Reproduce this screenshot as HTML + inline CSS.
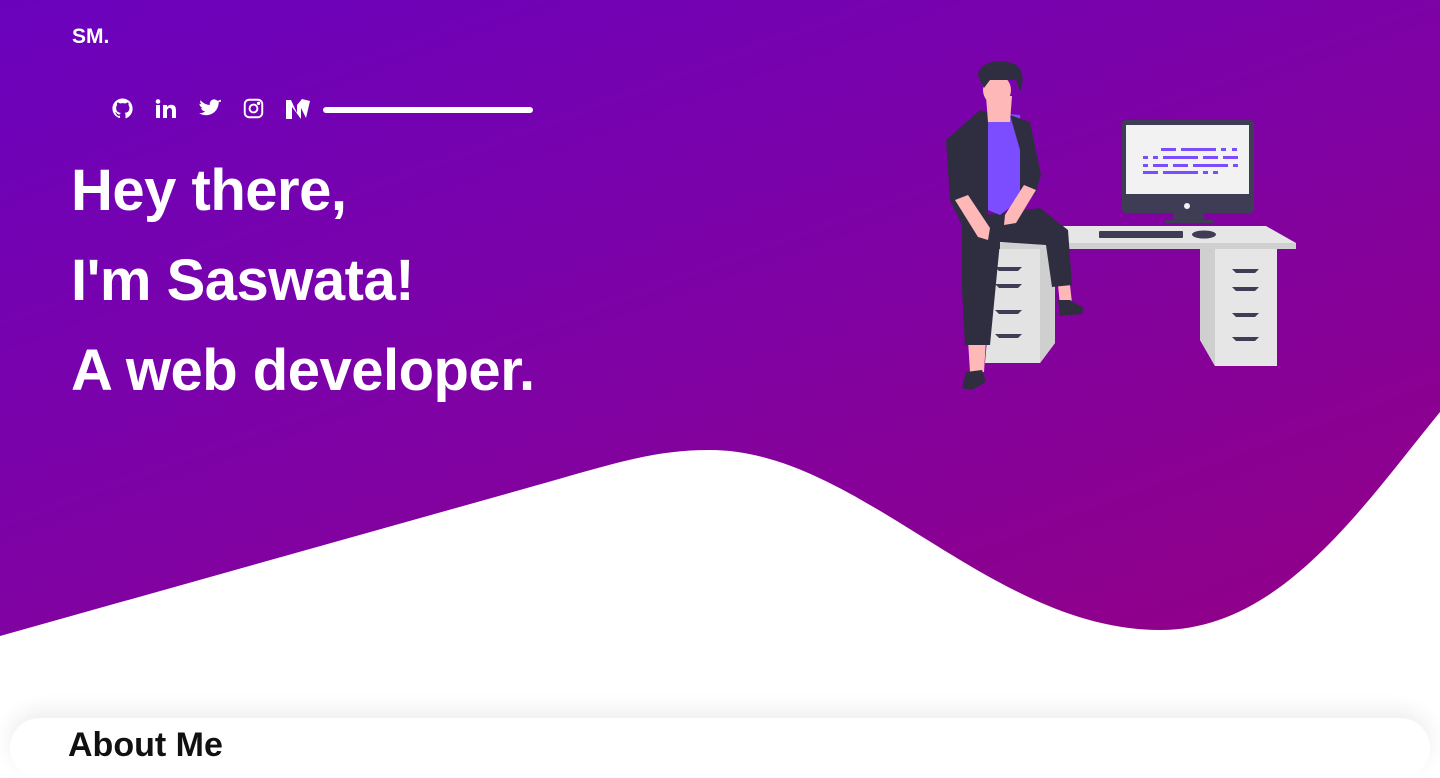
<!DOCTYPE html>
<html><head><meta charset="utf-8"><style>
*{margin:0;padding:0;box-sizing:border-box}
html,body{width:1440px;height:733px;overflow:hidden;background:#fff;font-family:"Liberation Sans",sans-serif}
.hero{position:absolute;left:0;top:0;width:1440px;height:733px;background:linear-gradient(160deg,#6a02bd 0%,#7c02a8 40%,#960080 100%)}
.logo{position:absolute;left:72px;top:25px;color:#fff;font-weight:700;font-size:21px}
.icons{position:absolute;left:112px;top:98px;display:flex;align-items:center}
.icons svg{margin-right:22px}
.bar{position:absolute;left:323px;top:107px;width:210px;height:6px;background:#fff;border-radius:3px}
h1{position:absolute;left:71px;top:146px;color:#fff;font-weight:900;font-size:58px;line-height:90px;letter-spacing:-0.5px}
.card{position:absolute;left:10px;top:718px;width:1420px;height:60px;background:#fff;border-radius:30px;box-shadow:0 -8px 20px rgba(0,0,0,.07)}
.about{position:absolute;left:68px;top:726px;font-size:34px;font-weight:900;color:#111}
</style></head><body>
<div class="hero"></div>
<svg style="position:absolute;left:0;top:0" width="1440" height="733"><path d="M0,636 L520,490 C610,465 650,450 710,450 C860,450 990,630 1160,630 C1280,630 1360,510 1440,412 L1440,733 L0,733 Z" fill="#fff"/></svg>
<div class="card"></div>
<div class="about">About Me</div>
<div class="logo">SM.</div>
<div class="icons">
<svg width="21" height="21" viewBox="0 0 24 24"><path fill="#fff" d="M12 .5C5.7.5.5 5.7.5 12c0 5.1 3.3 9.4 7.9 10.9.6.1.8-.3.8-.6v-2c-3.2.7-3.9-1.5-3.9-1.5-.5-1.3-1.3-1.7-1.3-1.7-1-.7.1-.7.1-.7 1.2.1 1.8 1.2 1.8 1.2 1 1.8 2.7 1.3 3.4 1 .1-.8.4-1.3.7-1.6-2.6-.3-5.3-1.3-5.3-5.7 0-1.3.5-2.3 1.2-3.1-.1-.3-.5-1.5.1-3.1 0 0 1-.3 3.3 1.2a11 11 0 0 1 6 0c2.3-1.5 3.3-1.2 3.3-1.2.7 1.6.2 2.8.1 3.1.8.8 1.2 1.8 1.2 3.1 0 4.4-2.7 5.4-5.3 5.7.4.4.8 1.1.8 2.2v3.3c0 .3.2.7.8.6A11.5 11.5 0 0 0 23.5 12C23.5 5.7 18.3.5 12 .5z"/></svg>
<svg width="22" height="20" viewBox="0 0 22 20"><rect x="1" y="6" width="4" height="13" fill="#fff"/><circle cx="3" cy="2.5" r="2.3" fill="#fff"/><path fill="#fff" d="M8 6h4v2c1-1.5 2.5-2.3 4.3-2.3 3 0 4.7 1.8 4.7 5.6V19h-4v-7c0-2-.7-3-2.2-3S12 10 12 12v7H8z"/></svg>
<svg width="22" height="19" viewBox="0 0 24 20"><path fill="#fff" d="M24 2.4c-.9.4-1.8.7-2.8.8 1-.6 1.8-1.6 2.2-2.7-1 .6-2 1-3.1 1.2A4.9 4.9 0 0 0 11.9 6.2 14 14 0 0 1 1.7 1C.9 2.4 1.3 4.3 2.7 5.3c-.8 0-1.6-.3-2.2-.6 0 2.4 1.7 4.4 3.9 4.8-.7.2-1.5.2-2.2.1.6 2 2.4 3.4 4.6 3.4A9.9 9.9 0 0 1 0 15.1 14 14 0 0 0 7.5 17.3c9.1 0 14-7.5 14-14v-.6c1-.7 1.8-1.5 2.5-2.4z"/></svg>
<svg width="21" height="21" viewBox="0 0 24 24" fill="none" stroke="#fff" stroke-width="2.2"><rect x="2" y="2" width="20" height="20" rx="5"/><circle cx="12" cy="12" r="4.5"/><circle cx="17.8" cy="6.2" r=".8" fill="#fff"/></svg>
<svg width="24" height="20" viewBox="0 0 24 20"><path fill="#fff" d="M0 1h5l6 13V6l5-6 8 2-4 17-5-10v11L6 8v12H0z"/></svg>
</div>
<div class="bar"></div>
<h1>Hey there,<br>I'm Saswata!<br>A web developer.</h1>
<svg style="position:absolute;left:930px;top:55px" width="380" height="340" viewBox="930 55 380 340">
<path d="M1000,226 L1266,226 L1296,243 L1296,249 L1000,249 Z" fill="#e6e6e6"/>
<rect x="1000" y="243" width="296" height="6" fill="#d0d0d0"/>
<path d="M995,249 L1055,249 L1055,343 L1040,363 L985,363 Z" fill="#e3e3e3"/>
<path d="M1040,249 L1055,249 L1055,343 L1040,363 Z" fill="#cfcfcf"/>
<path d="M1200,249 L1277,249 L1277,366 L1215,366 L1200,340 Z" fill="#e6e6e6"/>
<path d="M1200,249 L1215,249 L1215,366 L1200,340 Z" fill="#cfcfcf"/>
<g fill="#3f3d56"><path d="M995,267h27l-4,4h-19z"/><path d="M995,284h27l-4,4h-19z"/><path d="M995,310h27l-4,4h-19z"/><path d="M995,334h27l-4,4h-19z"/>
<path d="M1232,269h27l-4,4h-19z"/><path d="M1232,287h27l-4,4h-19z"/><path d="M1232,313h27l-4,4h-19z"/><path d="M1232,337h27l-4,4h-19z"/></g>
<rect x="1122" y="120" width="132" height="93" rx="4" fill="#3f3d56"/>
<rect x="1126" y="125" width="123" height="69" fill="#f2f2f2"/>
<circle cx="1187" cy="206" r="3" fill="#f2f2f2"/>
<path d="M1173,213h30l2,7h8v3h-47v-3h7z" fill="#3f3d56"/>
<rect x="1099" y="231" width="84" height="7" rx="1" fill="#3f3d56"/>
<ellipse cx="1204" cy="234.5" rx="12" ry="4" fill="#3f3d56"/>
<g fill="#7c4dff"><rect x="1161" y="148" width="15" height="3"/><rect x="1181" y="148" width="35" height="3"/><rect x="1221" y="148" width="5" height="3"/><rect x="1232" y="148" width="5" height="3"/>
<rect x="1143" y="156" width="5" height="3"/><rect x="1153" y="156" width="5" height="3"/><rect x="1163" y="156" width="35" height="3"/><rect x="1203" y="156" width="15" height="3"/><rect x="1223" y="156" width="15" height="3"/>
<rect x="1143" y="164" width="5" height="3"/><rect x="1153" y="164" width="15" height="3"/><rect x="1173" y="164" width="15" height="3"/><rect x="1193" y="164" width="35" height="3"/><rect x="1233" y="164" width="5" height="3"/>
<rect x="1143" y="171" width="15" height="3"/><rect x="1163" y="171" width="35" height="3"/><rect x="1203" y="171" width="5" height="3"/><rect x="1213" y="171" width="5" height="3"/></g>
<path d="M968,340 L986,340 L984,372 L970,372 Z" fill="#ffb8b8"/>
<path d="M1058,285 L1070,285 L1072,303 L1060,305 Z" fill="#ffb8b8"/>
<path d="M962,218 L1040,208 L1068,230 L1072,285 L1052,287 L1046,245 L1000,242 L990,345 L965,345 L962,290 Z" fill="#2f2e41"/>
<path d="M966,372 L982,370 L986,382 L972,390 L962,388 Z" fill="#2f2e41"/>
<path d="M1058,300 L1070,300 L1084,308 L1082,314 L1060,316 Z" fill="#2f2e41"/>
<path d="M988,112 L1020,115 L1026,195 L1000,215 L988,210 Z" fill="#7c4dff"/>
<path d="M980,110 L988,112 L988,215 L994,218 L975,230 L962,225 L950,200 L946,140 Z" fill="#2f2e41"/>
<path d="M1010,115 L1030,122 L1041,175 L1035,195 L1020,190 L1020,150 Z" fill="#2f2e41"/>
<path d="M986,96 L1012,96 L1010,122 L988,122 Z" fill="#ffb8b8"/>
<ellipse cx="997" cy="90" rx="14" ry="15" fill="#ffb8b8"/>
<path d="M978,76 C978,62 1000,58 1014,64 C1024,68 1024,82 1020,92 L1016,80 L990,80 L984,88 Z" fill="#2f2e41"/>
<path d="M955,200 L968,195 L990,228 L988,240 L978,237 Z" fill="#ffb8b8"/>
<path d="M1024,185 L1036,190 L1016,223 L1004,225 L1005,215 Z" fill="#ffb8b8"/>
</svg>
</body></html>
